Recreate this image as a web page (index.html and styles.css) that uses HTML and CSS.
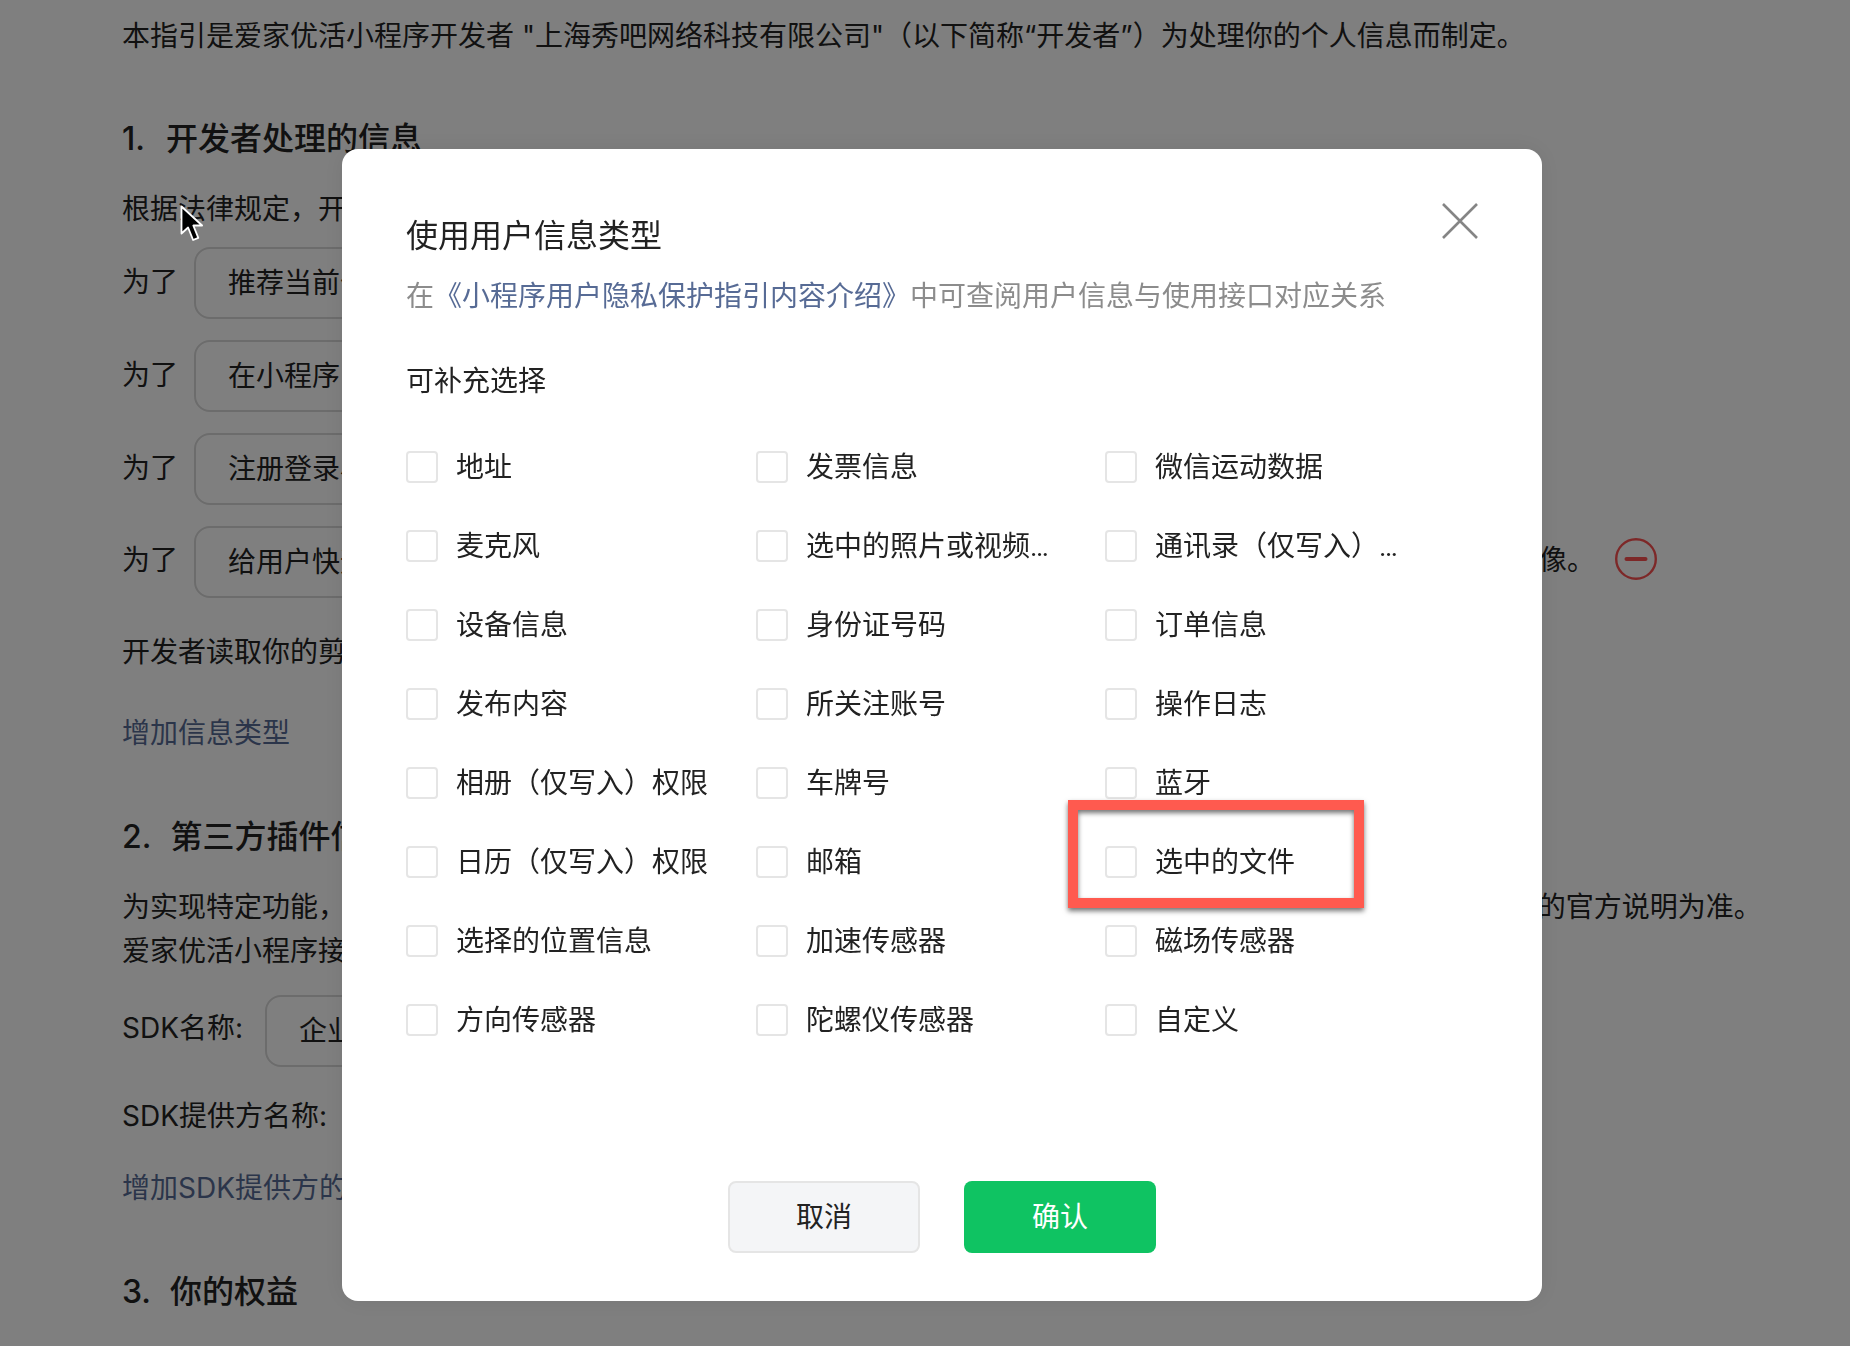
FILE: index.html
```html
<!DOCTYPE html>
<html lang="zh-CN">
<head>
<meta charset="utf-8">
<title>小程序用户隐私保护指引</title>
<link rel="stylesheet" href="styles.css">
</head>
<body>
<main class="page">
  <p class="intro">本指引是爱家优活小程序开发者 "上海秀吧网络科技有限公司"（以下简称“开发者”）为处理你的个人信息而制定。</p>

  <h2 class="heading heading-first"><span class="num num-one">1.</span>开发者处理的信息</h2>
  <p class="text lead">根据法律规定，开发者仅处理实现小程序功能所必要的信息。</p>

  <div class="row row-first"><span class="label">为了</span><div class="field">推荐当前位置附近的服务</div></div>
  <div class="row"><span class="label">为了</span><div class="field">在小程序内展示用户信息</div></div>
  <div class="row"><span class="label">为了</span><div class="field">注册登录小程序账号</div></div>
  <div class="row">
    <span class="label label-up">为了</span>
    <div class="field field-wide">给用户快速设置头像</div>
    <span class="label label-up tail">，开发者将收集你的图像。</span>
    <svg class="minus" viewBox="0 0 42 42" aria-hidden="true"><circle cx="21" cy="21" r="19.8"/><path d="M11.5 21h19"/></svg>
  </div>

  <p class="text after-rows">开发者读取你的剪切板，用于小程序内容粘贴。</p>
  <p class="text link add-type">增加信息类型</p>

  <h2 class="heading heading-second"><span class="num">2.</span>第三方插件信息</h2>
  <p class="text para">为实现特定功能，爱家优活小程序接入了由第三方提供的插件或软件工具开发包，相关信息的处理以第三方 提供方 的官方说明为准。<br>爱家优活小程序接入的第三方插件信息如下。</p>

  <div class="row row-sdk"><span class="label label-sdk">SDK名称:</span><div class="field field-sdk">企业微信</div></div>
  <p class="text provider">SDK提供方名称:</p>
  <p class="text link add-sdk">增加SDK提供方的信息</p>

  <h2 class="heading heading-third"><span class="num">3.</span>你的权益</h2>
</main>

<div class="overlay">
  <svg class="cursor" viewBox="0 0 25 38" aria-hidden="true"><path d="M1.5 1.5v27l6.6-6 5 12.5 5.2-2.2-5-12.3h8.8z"/></svg>

  <section class="modal">
    <svg class="close" viewBox="0 0 36 36" aria-hidden="true"><path d="M1 1l34 34M35 1L1 35"/></svg>
    <h3 class="modal-title">使用用户信息类型</h3>
    <p class="modal-sub">在<a class="modal-link">《小程序用户隐私保护指引内容介绍》</a>中可查阅用户信息与使用接口对应关系</p>
    <p class="modal-section">可补充选择</p>

    <div class="options">
      <label class="option"><i class="box"></i><span class="name">地址</span></label>
      <label class="option"><i class="box"></i><span class="name">发票信息</span></label>
      <label class="option"><i class="box"></i><span class="name">微信运动数据</span></label>
      <label class="option"><i class="box"></i><span class="name">麦克风</span></label>
      <label class="option"><i class="box"></i><span class="name">选中的照片或视频信息</span></label>
      <label class="option"><i class="box"></i><span class="name">通讯录（仅写入）权限</span></label>
      <label class="option"><i class="box"></i><span class="name">设备信息</span></label>
      <label class="option"><i class="box"></i><span class="name">身份证号码</span></label>
      <label class="option"><i class="box"></i><span class="name">订单信息</span></label>
      <label class="option"><i class="box"></i><span class="name">发布内容</span></label>
      <label class="option"><i class="box"></i><span class="name">所关注账号</span></label>
      <label class="option"><i class="box"></i><span class="name">操作日志</span></label>
      <label class="option"><i class="box"></i><span class="name">相册（仅写入）权限</span></label>
      <label class="option"><i class="box"></i><span class="name">车牌号</span></label>
      <label class="option"><i class="box"></i><span class="name">蓝牙</span></label>
      <label class="option"><i class="box"></i><span class="name">日历（仅写入）权限</span></label>
      <label class="option"><i class="box"></i><span class="name">邮箱</span></label>
      <label class="option"><i class="box"></i><span class="name">选中的文件</span></label>
      <label class="option"><i class="box"></i><span class="name">选择的位置信息</span></label>
      <label class="option"><i class="box"></i><span class="name">加速传感器</span></label>
      <label class="option"><i class="box"></i><span class="name">磁场传感器</span></label>
      <label class="option"><i class="box"></i><span class="name">方向传感器</span></label>
      <label class="option"><i class="box"></i><span class="name">陀螺仪传感器</span></label>
      <label class="option"><i class="box"></i><span class="name">自定义</span></label>
    </div>

    <div class="actions">
      <button class="btn btn-cancel" type="button">取消</button>
      <button class="btn btn-ok" type="button">确认</button>
    </div>

    <div class="highlight"></div>
  </section>
</div>
</body>
</html>
```

FILE: styles.css
```css
* { box-sizing: border-box; }

html, body {
  margin: 0;
  height: 100%;
  overflow: hidden;
  background: #fff;
}

body {
  font-family: Inter, "Noto Sans CJK SC", sans-serif;
  font-size: 28px;
  line-height: 40px;
  color: #222;
}

h2, h3, p { margin: 0; font-weight: 400; }

.page {
  height: 1346px;
  padding: 16px 0 0 122px;
  overflow: hidden;
  white-space: nowrap;
}

.heading {
  font-size: 32px;
  line-height: 44px;
  font-weight: 500;
}
.num { margin-right: 19px; }
.num-one { margin-right: 21px; }
.heading-first { margin-top: 61px; }
.heading-second { margin-top: 62px; }
.heading-third { margin-top: 62px; }

.lead { margin-top: 28px; }

.row {
  display: flex;
  align-items: center;
  margin-top: 21px;
}
.row-first { margin-top: 18px; }

.label { margin-bottom: 2px; }
.label-up { margin-bottom: 4px; }
.label-sdk { margin-bottom: 6px; }

.field {
  flex: none;
  width: 700px;
  height: 72px;
  margin-left: 16px;
  padding: 0 32px;
  border: 2px solid #d9d9d9;
  border-radius: 16px;
  line-height: 69px;
}
.field-wide { width: 1049px; }
.field-sdk { margin-left: 22px; }

.tail { margin-left: 16px; }

.minus {
  flex: none;
  width: 42px;
  height: 42px;
  margin: 0 0 6px 20px;
  fill: none;
  stroke: #fa5151;
}
.minus circle { stroke-width: 2.4; }
.minus path { stroke-width: 4; stroke-linecap: round; }

.after-rows { margin-top: 34px; }
.add-type { margin-top: 41px; }
.link { color: #576b95; }

.para { margin-top: 26px; line-height: 44px; }
.row-sdk { margin-top: 22px; }
.provider { margin-top: 29px; }
.add-sdk { margin-top: 32px; }

.overlay {
  position: fixed;
  inset: 0;
  background: rgba(0, 0, 0, .5);
}

.cursor {
  position: absolute;
  left: 180px;
  top: 205px;
  width: 25px;
  height: 38px;
}
.cursor path {
  fill: #000;
  stroke: #fff;
  stroke-width: 1.8;
  stroke-linejoin: round;
}

.modal {
  position: absolute;
  left: 342px;
  top: 149px;
  width: 1200px;
  height: 1152px;
  display: flex;
  flex-direction: column;
  padding: 65px 0 48px 64px;
  background: #fff;
  border-radius: 16px;
  box-shadow: 0 0 24px rgba(0, 0, 0, .08);
}

.close {
  position: absolute;
  left: 1100px;
  top: 54px;
  width: 36px;
  height: 36px;
  fill: none;
  stroke: #858585;
  stroke-width: 2.6;
}

.modal-title {
  font-size: 32px;
  line-height: 44px;
}
.modal-sub {
  margin-top: 18px;
  color: #8c8c8c;
  white-space: nowrap;
}
.modal-link { color: #576b95; }
.modal-section { margin-top: 45px; }

.options {
  display: grid;
  grid-template-columns: 350px 349px 349px;
  grid-auto-rows: 40px;
  row-gap: 39px;
  margin-top: 46px;
}

.option {
  display: flex;
  align-items: center;
  gap: 18px;
  min-width: 0;
}

.box {
  flex: none;
  width: 32px;
  height: 32px;
  border: 2px solid #e5e5e5;
  border-radius: 4px;
  background: #fff;
}

.name {
  max-width: 252px;
  padding-top: 2px;
  font-family: Roboto, "Noto Sans CJK SC", sans-serif;
  white-space: nowrap;
  overflow: hidden;
  text-overflow: ellipsis;
}

.actions {
  display: flex;
  justify-content: center;
  gap: 44px;
  margin-top: auto;
  margin-left: -64px;
}

.btn {
  width: 192px;
  height: 72px;
  border-radius: 8px;
  font: inherit;
  padding: 0 0 0;
}
.btn-cancel {
  background: #f4f5f7;
  border: 2px solid #e5e5e5;
  color: #222;
}
.btn-ok {
  background: #0fc362;
  border: 0;
  color: #fff;
}

.highlight {
  position: absolute;
  left: 726px;
  top: 651px;
  width: 296px;
  height: 108px;
  border: 10px solid #ff5a4f;
  box-shadow: 0 3px 5px rgba(0, 0, 0, .55), inset 0 3px 5px rgba(0, 0, 0, .55);
}
```
